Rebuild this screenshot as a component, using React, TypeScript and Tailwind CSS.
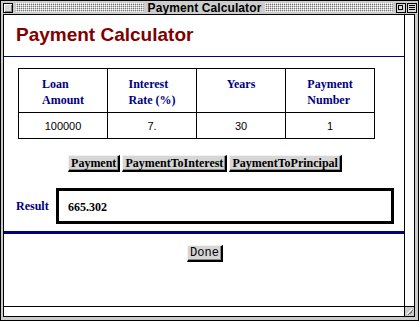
import React from "react";

function Stripes() {
  return (
    <svg className="flex-1 w-0 min-w-0 h-[9px] block" preserveAspectRatio="none">
      <defs>
        <pattern id="dots" width="2" height="2" patternUnits="userSpaceOnUse">
          <rect width="2" height="2" fill="#cccccc" />
          <rect x="0" y="0" width="1" height="1" fill="#ffffff" />
          <rect x="1" y="1" width="1" height="1" fill="#777777" />
        </pattern>
      </defs>
      <rect width="100%" height="100%" fill="url(#dots)" />
    </svg>
  );
}

function Btn({ children, mono }: { children: React.ReactNode; mono?: boolean }) {
  return (
    <button
      className={
        "h-[17px] px-[2px] bg-[#d6d6d6] text-[#000000] text-[12px] leading-[13px] border-t border-l border-[#f2f2f2] border-r-2 border-b-2 border-r-black border-b-black shadow-[inset_-1px_-1px_0_#8a8a8a] " +
        (mono ? "font-['Liberation_Mono',monospace] font-normal" : "font-['Liberation_Serif',serif] font-bold")
      }
    >
      {children}
    </button>
  );
}

export default function App() {
  const head = "font-['Liberation_Serif',serif] font-bold text-[12px] leading-[16px] text-[#000080]";
  const cell = "border-r border-b border-black";
  return (
    <div className="w-[419px] h-[321px] overflow-hidden bg-[#cccccc] border border-black flex flex-col font-['Liberation_Sans',sans-serif]">
      {/* title bar */}
      <div className="h-[13px] flex items-center pl-[2px] pr-[1px]">
        <div className="w-[10px] h-[10px] border border-black bg-[#d8d8d8] shadow-[inset_1px_1px_0_#ffffff,inset_-1px_-1px_0_#888888]" />
        <div className="flex-1 flex items-center ml-[3px]">
          <Stripes />
          <div className="px-[4px] text-[12px] leading-[12px] font-bold text-black tracking-[0.1px] whitespace-nowrap">Payment Calculator</div>
          <Stripes />
        </div>
        <div className="ml-[3px] w-[10px] h-[10px] border border-black bg-[#d8d8d8] relative">
          <div className="absolute left-[1px] top-[1px] w-[5px] h-[5px] border border-black" />
        </div>
        <div className="ml-[1px] w-[10px] h-[10px] border border-black bg-[#d8d8d8] flex flex-col justify-center gap-[1px] px-[1px]">
          <div className="h-px bg-black" />
          <div className="h-px bg-black" />
          <div className="h-px bg-black" />
        </div>
      </div>

      {/* content frame */}
      <div className="flex-1 ml-[2px] mr-[3px] mb-[3px] border border-black bg-white flex">
        <div className="flex-1 flex flex-col">
          <div className="flex-1 flex flex-col">
            <h1 className="pt-[9px] pl-[12px] text-[19px] leading-[22px] font-bold text-[#800000] font-['Liberation_Sans',sans-serif]">
              Payment Calculator
            </h1>
            <div className="mt-[10px] h-px bg-[#000080]" />

            <div className="mt-[11px] ml-[14px] w-[357px] grid grid-cols-[89px_89px_89px_89px] border-l border-t border-black">
              {[
                ["Loan", "Amount"],
                ["Interest", "Rate (%)"],
                ["Years"],
                ["Payment", "Number"],
              ].map((lines, i) => (
                <div key={i} className={cell + " h-[44px] pt-[7px] flex justify-center"}>
                  <div className={head + " text-left"}>
                    {lines.map((l) => (
                      <div key={l}>{l}</div>
                    ))}
                  </div>
                </div>
              ))}
              {["100000", "7.", "30", "1"].map((v, i) => (
                <div key={i} className={cell + " h-[26px] pt-[2px] flex items-center justify-center"}>
                  <span className="text-[11px] leading-[13px] text-[#000000] font-['Liberation_Sans',sans-serif]">{v}</span>
                </div>
              ))}
            </div>

            <div className="mt-[16px] flex justify-center gap-[2px] pl-[2px]">
              <Btn>Payment</Btn>
              <Btn>PaymentToInterest</Btn>
              <Btn>PaymentToPrincipal</Btn>
            </div>

            <div className="mt-[16px] flex items-center pl-[12px]">
              <div className="w-[40px] font-['Liberation_Serif',serif] font-bold text-[12px] leading-[14px] text-[#000080]">Result</div>
              <div className="w-[338px] h-[36px] border-[3px] border-black flex items-center pl-[9px] pt-[1px] font-['Liberation_Serif',serif] font-bold text-[12px] text-black">
                665.302
              </div>
            </div>

            <div className="mt-[7px] h-[3px] bg-[#000080]" />

            <div className="mt-[11px] flex justify-center pl-[2px]">
              <Btn mono>Done</Btn>
            </div>
          </div>
          <div className="h-[10px] border-t border-black" />
        </div>
        <div className="w-[10px] border-l border-black flex flex-col">
          <div className="flex-1" />
          <div className="h-[10px] border-t border-black bg-[#cccccc] relative">
            <svg width="9" height="9" className="absolute left-0 top-0">
              <path d="M2 7 L7 2" stroke="#ffffff" strokeWidth="1" />
              <path d="M3 8 L8 3" stroke="#777777" strokeWidth="1" />
              <path d="M5 7 L7 5" stroke="#777777" strokeWidth="1" />
            </svg>
          </div>
        </div>
      </div>
    </div>
  );
}
